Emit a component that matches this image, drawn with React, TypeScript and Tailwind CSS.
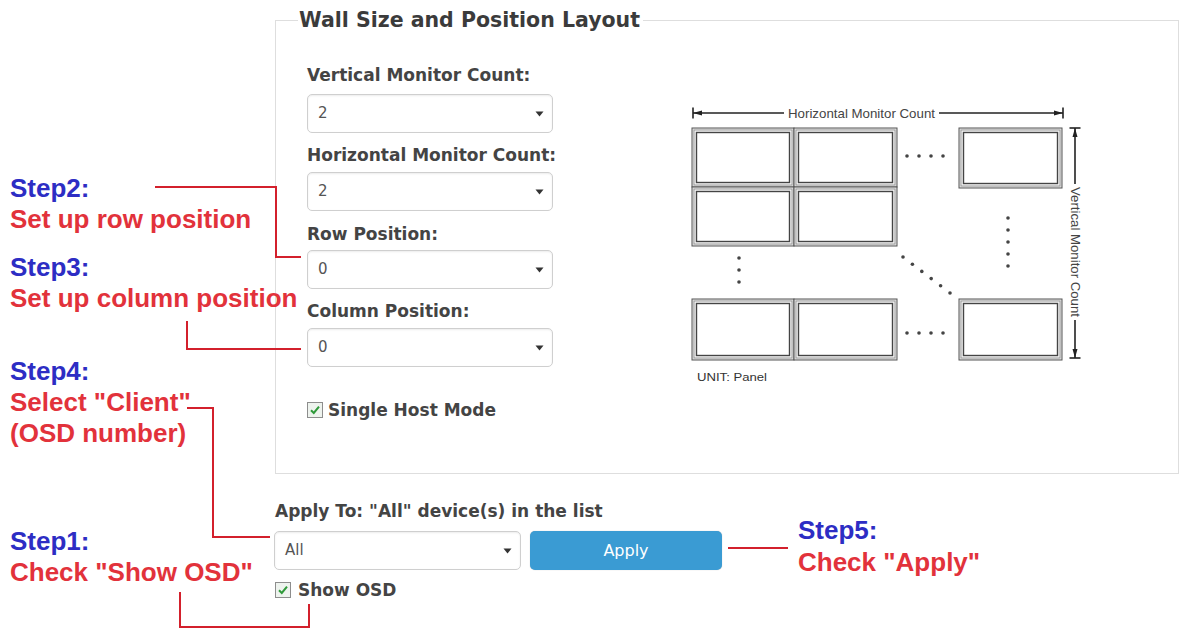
import React from "react";

const ui = "font-['DejaVu_Sans',Verdana,sans-serif]";

function Caret() {
  return (
    <svg width="9" height="6" viewBox="0 0 9 6" className="shrink-0">
      <path d="M0.5 0.5 L8.5 0.5 L4.5 5.5 Z" fill="#333" />
    </svg>
  );
}

function Select({ value, className = "" }: { value: string; className?: string }) {
  return (
    <div
      className={`flex h-[39px] items-center justify-between rounded-[5px] border border-[#cfcfcf] bg-white pl-[10px] pr-[8px] shadow-[inset_0_1px_2px_rgba(0,0,0,0.08)] ${className}`}
    >
      <span className="text-[15px] text-[#555]">{value}</span>
      <Caret />
    </div>
  );
}

function Checkbox() {
  return (
    <span className="flex h-[16px] w-[16px] shrink-0 items-center justify-center border border-[#8d8d8d] bg-[#eef3ee]">
      <svg width="12" height="12" viewBox="0 0 12 12">
        <path d="M2 6.2 L4.8 9 L10 2.6" fill="none" stroke="#2f9a3a" strokeWidth="2" />
      </svg>
    </span>
  );
}

function Label({ children, className = "" }: { children: React.ReactNode; className?: string }) {
  return (
    <div className={`whitespace-nowrap text-[17px] font-bold leading-[20px] text-[#444] ${className}`}>{children}</div>
  );
}

function Monitor({ x, y, w, h }: { x: number; y: number; w: number; h: number }) {
  return (
    <g>
      <rect x={x} y={y} width={w} height={h} fill="#e4e4e4" stroke="#555" strokeWidth="1" />
      <rect x={x + 2} y={y + 2} width={w - 4} height={h - 4} fill="#f4f4f4" stroke="#8a8a8a" strokeWidth="0.8" />
      <rect x={x + 4.5} y={y + 4.5} width={w - 9} height={h - 9} fill="#fff" stroke="#444" strokeWidth="1.4" />
    </g>
  );
}

function Dots({ pts }: { pts: [number, number][] }) {
  return (
    <g fill="#444">
      {pts.map(([cx, cy], i) => (
        <circle key={i} cx={cx} cy={cy} r="1.8" />
      ))}
    </g>
  );
}

function WallDiagram() {
  const diag: [number, number][] = [0, 1, 2, 3, 4, 5].map((i) => [215 + i * 9.4, 152 + i * 7.2]);
  return (
    <svg width="400" height="285" viewBox="0 0 400 285" className="shrink-0">
      {/* horizontal count arrow */}
      <g stroke="#222" strokeWidth="1.6">
        <line x1="5" y1="8" x2="96" y2="8" />
        <line x1="251" y1="8" x2="375" y2="8" />
        <line x1="5" y1="2.5" x2="5" y2="13.5" />
        <line x1="375" y1="2.5" x2="375" y2="13.5" />
      </g>
      <path d="M5 8 L14 5.5 L14 10.5 Z M375 8 L366 5.5 L366 10.5 Z" fill="#222" />
      <text
        x="100"
        y="12.5"
        fontSize="13"
        textLength="147"
        lengthAdjust="spacingAndGlyphs"
        fill="#444"
        fontFamily="Liberation Sans, Arial, sans-serif"
      >
        Horizontal Monitor Count
      </text>

      {/* panels */}
      <Monitor x={4} y={23} w={102} h={59} />
      <Monitor x={106} y={23} w={103} h={59} />
      <Monitor x={4} y={82} w={102} h={59} />
      <Monitor x={106} y={82} w={103} h={59} />
      <Monitor x={4} y={194} w={102} h={61} />
      <Monitor x={106} y={194} w={103} h={61} />
      <Monitor x={271} y={23} w={103} h={60} />
      <Monitor x={271} y={194} w={103} h={61} />

      <Dots pts={[[219, 51], [231, 51], [243, 51], [255, 51]]} />
      <Dots pts={[[219, 228], [231, 228], [243, 228], [255, 228]]} />
      <Dots pts={[[51, 153], [51, 165], [51, 177]]} />
      <Dots pts={[[320, 113], [320, 125], [320, 137], [320, 149], [320, 161]]} />
      <Dots pts={diag} />

      {/* vertical count arrow */}
      <g stroke="#222" strokeWidth="1.6">
        <line x1="387" y1="23" x2="387" y2="79" />
        <line x1="387" y1="215" x2="387" y2="253" />
        <line x1="381.5" y1="23" x2="392.5" y2="23" />
        <line x1="381.5" y1="253" x2="392.5" y2="253" />
      </g>
      <path d="M387 23 L384.5 32 L389.5 32 Z M387 253 L384.5 244 L389.5 244 Z" fill="#222" />
      <text
        transform="translate(382.5 82) rotate(90)"
        fontSize="13"
        textLength="130"
        lengthAdjust="spacingAndGlyphs"
        fill="#444"
        fontFamily="Liberation Sans, Arial, sans-serif"
      >
        Vertical Monitor Count
      </text>

      <text
        x="9"
        y="276"
        fontSize="11.5"
        textLength="70"
        lengthAdjust="spacingAndGlyphs"
        fill="#333"
        fontFamily="Liberation Sans, Arial, sans-serif"
      >
        UNIT: Panel
      </text>
    </svg>
  );
}

function Step({
  n,
  lines,
  className,
  leading = "leading-[31px]",
}: {
  n: number;
  lines: string[];
  className: string;
  leading?: string;
}) {
  return (
    <div className={`absolute font-['Liberation_Sans',Arial,sans-serif] text-[26px] font-bold ${leading} ${className}`}>
      <div className="text-[#2d2dc4]">Step{n}:</div>
      {lines.map((l) => (
        <div key={l} className="whitespace-nowrap text-[#e2323b]">
          {l}
        </div>
      ))}
    </div>
  );
}

export default function App() {
  return (
    <div className={`relative h-[634px] w-[1182px] overflow-hidden bg-white ${ui}`}>
      {/* configuration UI */}
      <div className="pl-[275px] pt-[8px]">
        <fieldset className="h-[466px] w-[904px] border border-[#dedede] p-0">
          <legend className="ml-[22px] pl-[1px] pr-[3px] text-[20.5px] font-bold leading-[24px] text-[#3b3b3b]">
            Wall Size and Position Layout
          </legend>
          <div className="flex pl-[31px] pt-[33px]">
            <div className="w-[246px] shrink-0">
              <Label>Vertical Monitor Count:</Label>
              <Select value="2" className="mt-[9px]" />
              <Label className="mt-[12px]">Horizontal Monitor Count:</Label>
              <Select value="2" className="mt-[7px]" />
              <Label className="mt-[13px]">Row Position:</Label>
              <Select value="0" className="mt-[6px]" />
              <Label className="mt-[12px]">Column Position:</Label>
              <Select value="0" className="mt-[7px]" />
              <div className="mt-[33px] flex items-center gap-[5px]">
                <Checkbox />
                <Label>Single Host Mode</Label>
              </div>
            </div>
            <div className="ml-[135px] mt-[40px]">
              <WallDiagram />
            </div>
          </div>
        </fieldset>

        <Label className="mt-[27px]">Apply To: "All" device(s) in the list</Label>
        <div className="mt-[10px] flex gap-[9px]">
          <Select value="All" className="-ml-px w-[247px]" />
          <button className="h-[39px] w-[192px] rounded-[5px] bg-[#3a9bd3] text-[16px] text-white shadow-[0_0_1px_rgba(0,0,0,0.3)]">
            Apply
          </button>
        </div>
        <div className="mt-[10px] flex items-center gap-[7px]">
          <Checkbox />
          <Label>Show OSD</Label>
        </div>
      </div>

      {/* annotations */}
      <Step n={2} lines={["Set up row position"]} className="left-[10px] top-[173px]" />
      <Step n={3} lines={["Set up column position"]} className="left-[10px] top-[252px]" />
      <Step n={4} lines={['Select "Client"', "(OSD number)"]} className="left-[10px] top-[356px]" />
      <Step n={1} lines={['Check "Show OSD"']} className="left-[10px] top-[526px]" />
      <Step n={5} lines={['Check "Apply"']} className="left-[798px] top-[514px]" leading="leading-[32px]" />

      <svg className="pointer-events-none absolute left-0 top-0" width="1182" height="634">
        <g fill="none" stroke="#d3202c" strokeWidth="2">
          <polyline points="155,187 276,187 276,257 301,257" />
          <polyline points="187,321 187,349 301,349" />
          <polyline points="187,408 213,408 213,537 270,537" />
          <polyline points="180,592 180,627 309,627 309,604" />
          <polyline points="728,548 788,548" />
        </g>
      </svg>
    </div>
  );
}
